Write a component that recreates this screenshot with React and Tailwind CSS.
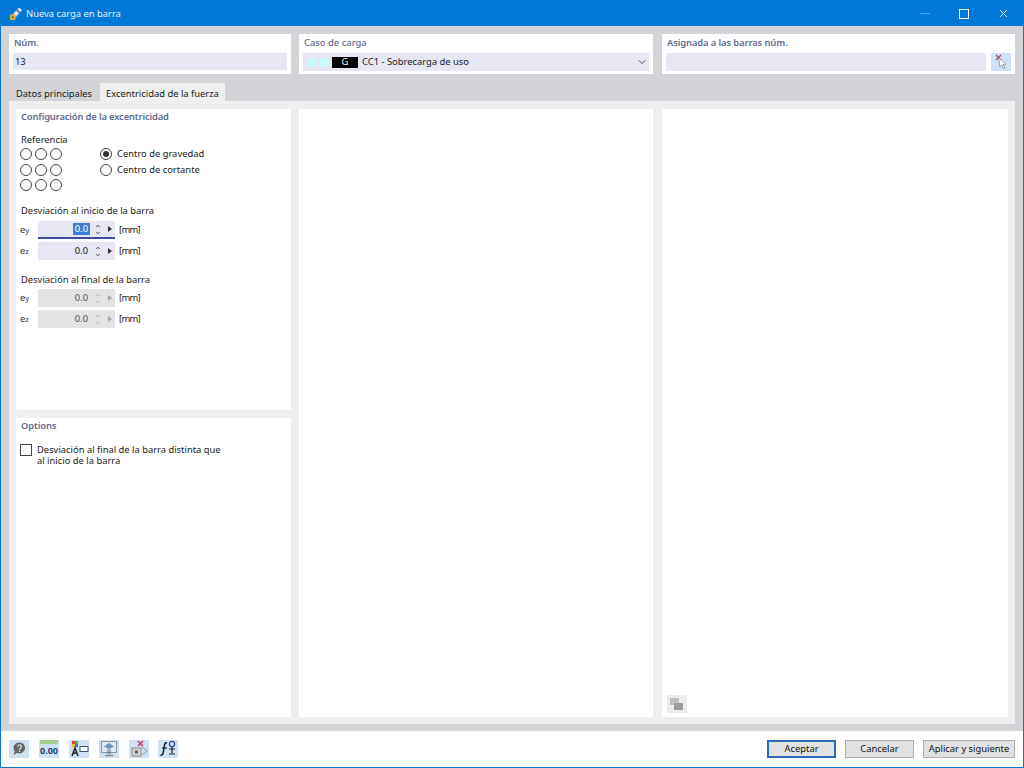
import { ChevronDown, ChevronUp, X } from "lucide-react";

function Radio({ checked }) {
  return (
    <span className="flex h-3 w-3 items-center justify-center rounded-full border border-[#444] bg-white">
      {checked && <span className="h-1.5 w-1.5 rounded-full bg-[#333]" />}
    </span>
  );
}

function Spinner({ off }) {
  const color = off ? "text-[#a8a8a8]" : "text-[#333]";
  return (
    <div className={`flex items-center ${color}`}>
      <div className="flex w-[7px] flex-col items-center gap-[1px]">
        <ChevronUp size={6} strokeWidth={3.5} />
        <ChevronDown size={6} strokeWidth={3.5} />
      </div>
      <svg className="ml-[7px] mr-[3px]" width="4" height="6" viewBox="0 0 4 6">
        <path d="M0 0 L4 3 L0 6 Z" fill="currentColor" />
      </svg>
    </div>
  );
}

function NumRow({ sub, active, off, className }) {
  return (
    <div className={`flex h-[18px] items-center ${className || ""}`}>
      <span className="w-[18px] text-[#333]">
        e<span className="text-[7.5px]">{sub}</span>
      </span>
      <div
        className={`flex h-[18px] w-[77px] items-center justify-end ${off ? "bg-[#e3e3e3] text-[#555]" : "bg-[#e6e7f3] text-[#222]"} ${active ? "border-b-2 border-[#3f4f9f]" : ""}`}
      >
        <span className={`mr-[4px] px-[2px] ${active ? "bg-[#3d7fd0] text-white" : ""}`}>0.0</span>
        <Spinner off={off} />
      </div>
      <span className="ml-[4px] tracking-[-0.7px] text-[#222]">[mm]</span>
    </div>
  );
}

function IconBtn({ children, className }) {
  return (
    <div className={`flex h-[18px] w-[20px] items-center justify-center bg-[#cfe2f5] ${className || ""}`}>
      {children}
    </div>
  );
}

function HelpIcon() {
  return (
    <svg width="16" height="16" viewBox="0 0 16 16">
      <path d="M8.5 1.5a5.5 5.5 0 1 1-2.6 10.3L2.5 14.5l1.2-4.2A5.5 5.5 0 0 1 8.5 1.5Z" fill="#666" />
      <path d="M6.8 5.6a1.8 1.8 0 1 1 2.6 1.7c-.7.4-.9.7-.9 1.5" fill="none" stroke="#cfe2f5" strokeWidth="1.3" />
      <rect x="7.8" y="9.6" width="1.4" height="1.4" fill="#cfe2f5" />
    </svg>
  );
}

function ZeroIcon() {
  return (
    <div className="flex h-[18px] w-[20px] flex-col items-center bg-[#cfe2f5]">
      <div className="h-[4px] w-[18px] bg-[#a3cf93]" />
      <span className="text-[9px] font-bold leading-[13px] text-[#25406b]">0.00</span>
    </div>
  );
}

function ColorsIcon() {
  return (
    <svg width="20" height="18" viewBox="0 0 20 18">
      <rect x="3" y="1" width="3" height="3" fill="#d9433a" />
      <rect x="6" y="1" width="3" height="3" fill="#58a84a" />
      <rect x="3" y="4" width="3" height="3" fill="#e6b83a" />
      <rect x="6" y="4" width="3" height="3" fill="#3a77c9" />
      <path d="M3 16 L6 8 L9 16 M4.3 13 H7.7" fill="none" stroke="#222" strokeWidth="1.5" />
      <rect x="11" y="6.5" width="8" height="5" fill="#fff" stroke="#33507f" />
    </svg>
  );
}

function ScreenIcon() {
  return (
    <svg width="20" height="18" viewBox="0 0 20 18">
      <rect x="2.5" y="1.5" width="15" height="11" fill="#dfe8f0" stroke="#8a949e" />
      <path d="M10 3 L15 6.5 L10 9 L5 6.5 Z" fill="#6b93ba" />
      <path d="M9 9 V14 M11 9 V14" stroke="#6b7a88" />
      <path d="M6 15.5 H14" stroke="#888" strokeWidth="1.5" />
    </svg>
  );
}

function CrossIcon() {
  return (
    <svg width="20" height="18" viewBox="0 0 20 18">
      <path d="M9 1 L14 6 M14 1 L9 6" stroke="#c2415a" strokeWidth="1.6" />
      <rect x="3" y="8" width="9" height="8" fill="#d4d4d4" stroke="#888" />
      <rect x="6" y="10.5" width="3" height="3" fill="#666" />
      <path d="M12 6 L18 11 L13 15" fill="none" stroke="#aaa" strokeWidth="1.2" />
    </svg>
  );
}

function FormulaIcon() {
  return (
    <svg width="20" height="18" viewBox="0 0 20 18">
      <path d="M9 3 C7 2 6.5 4 6 8 C5.5 12 5 16 2.5 15" fill="none" stroke="#222" strokeWidth="1.5" />
      <path d="M4 8 H9" stroke="#222" strokeWidth="1.2" />
      <circle cx="14" cy="4" r="2.6" fill="none" stroke="#33507f" strokeWidth="1.3" />
      <path d="M14 7 V13 M11 9 H17 M11 14 H17" stroke="#222" strokeWidth="1.2" />
    </svg>
  );
}

function PickIcon() {
  return (
    <svg width="16" height="16" viewBox="0 0 16 16">
      <path d="M3 1 L8 6 M8 1 L3 6" stroke="#b0475c" strokeWidth="1.4" />
      <path d="M6 4 L13 10 L10 10.5 L12 14 L10.5 14.5 L8.8 11 L6.5 12.5 Z" fill="#fff" stroke="#8a8a8a" strokeWidth="0.8" />
    </svg>
  );
}

export default function App() {
  return (
    <div className="flex h-[768px] w-[1024px] flex-col overflow-hidden border border-[#0b78d0] bg-[#d3d4d8] font-['Noto_Sans',sans-serif] text-[9.4px] leading-[12px]">
      <div className="flex h-[25px] shrink-0 items-center bg-[#0078d7] text-white">
        <svg className="ml-[7px]" width="15" height="15" viewBox="0 0 15 15">
          <path d="M5 8 L11 1.5 L14 4 L8 11 Z" fill="#d8dff0" />
          <path d="M8.5 3.5 L12 7" stroke="#4a5f95" strokeWidth="1.5" />
          <rect x="2" y="8.5" width="5.5" height="5.5" rx="1" fill="#e5b53a" />
          <circle cx="4.7" cy="11.2" r="1" fill="#6b4a10" />
        </svg>
        <span className="ml-[3px] text-[#e6f2fc]">Nueva carga en barra</span>
        <div className="ml-auto flex items-center">
          <span className="mr-[29px] h-px w-[10px] bg-[#4d9fe3]" />
          <span className="mr-[28px] h-[10px] w-[10px] border border-white" />
          <X className="mr-[13px] text-white" size={13} strokeWidth={1.5} />
        </div>
      </div>

      <div className="flex flex-1 flex-col px-2 pt-2">
        <div className="flex h-10 gap-2">
          <div className="w-[282px] bg-white px-1 pt-[3px]">
            <div className="h-[16px] pl-[1px] font-semibold tracking-[-0.1px] text-[#5f6b8f]">Núm.</div>
            <div className="flex h-[17px] items-center bg-[#e6e7f3] pl-[2px] text-[#222]">13</div>
          </div>
          <div className="w-[354px] bg-white px-1 pt-[3px]">
            <div className="h-[16px] pl-[1px] font-medium text-[#5f6b8f]">Caso de carga</div>
            <div className="flex h-[18px] items-center bg-[#e6e7f3] pl-[5px] text-[#222]">
              <span className="h-[9px] w-[9px] bg-[#ccf8fb]" />
              <span className="ml-[3px] h-[9px] w-[9px] bg-[#ccf8fb]" />
              <span className="ml-[3px] flex h-[11px] w-[26px] items-center justify-center bg-black text-white">G</span>
              <span className="ml-[4px]">CC1 - Sobrecarga de uso</span>
              <ChevronDown className="ml-auto mr-[1px] text-[#555]" size={12} />
            </div>
          </div>
          <div className="ml-px w-[353px] bg-white px-1 pt-[3px]">
            <div className="h-[16px] pl-[1px] font-semibold tracking-[-0.1px] text-[#5f6b8f]">Asignada a las barras núm.</div>
            <div className="flex h-[18px] gap-[5px]">
              <div className="w-[320px] bg-[#e6e7f3]" />
              <IconBtn>
                <PickIcon />
              </IconBtn>
            </div>
          </div>
        </div>

        <div className="mt-[9px] flex h-[18px] whitespace-nowrap text-[#222]">
          <div className="flex w-[91px] items-center pl-[7px] pt-[3px]">Datos principales</div>
          <div className="flex w-[125px] items-center bg-[#efefef] pl-[6px] pt-[3px]">Excentricidad de la fuerza</div>
        </div>

        <div className="flex h-[623px] bg-[#efefef] px-[7px] pb-[7px] pt-[8px] text-[#222]">
          <div className="flex w-[275px] flex-col gap-2">
            <div className="h-[301px] bg-white px-[4px] pt-[2px]">
              <div className="pl-[1px] font-semibold tracking-[-0.15px] text-[#5f6b8f]">Configuración de la excentricidad</div>
              <div className="mt-[11px] pl-[1px]">Referencia</div>
              <div className="mt-[2px] flex">
                <div className="grid w-[80px] grid-cols-[15px_15px_15px] gap-y-[3.5px]">
                  {[...Array(9)].map((_, i) => (
                    <Radio key={i} />
                  ))}
                </div>
                <div className="flex flex-col gap-[3.5px]">
                  <div className="flex items-center gap-[5px]">
                    <Radio checked />
                    <span>Centro de gravedad</span>
                  </div>
                  <div className="flex items-center gap-[5px]">
                    <Radio />
                    <span>Centro de cortante</span>
                  </div>
                </div>
              </div>
              <div className="mt-[14px] pl-[1px]">Desviación al inicio de la barra</div>
              <NumRow sub="y" active className="mt-[4px]" />
              <NumRow sub="z" className="mt-[3px]" />
              <div className="mt-[14px] pl-[1px]">Desviación al final de la barra</div>
              <NumRow sub="y" off className="mt-[3px]" />
              <NumRow sub="z" off className="mt-[3px]" />
            </div>
            <div className="h-[299px] bg-white px-[4px] pt-[2px]">
              <div className="pl-[1px] font-semibold tracking-[-0.1px] text-[#5f6b8f]">Options</div>
              <div className="mt-[11px] flex">
                <span className="mt-[1px] h-3 w-3 shrink-0 border border-[#444]" />
                <span className="ml-[5px] w-[190px] pt-[1px] leading-[11px]">
                  Desviación al final de la barra distinta que al inicio de la barra
                </span>
              </div>
            </div>
          </div>
          <div className="ml-2 w-[354px] bg-white" />
          <div className="ml-[9px] flex w-[346px] items-end bg-white p-[5px] pb-[4px]">
            <div className="flex h-[18px] w-[20px] items-center justify-center bg-[#ececec]">
              <svg width="16" height="14" viewBox="0 0 16 14">
                <rect x="1" y="1" width="9" height="7" fill="#c0c0c0" />
                <rect x="5" y="6" width="9" height="7" fill="#9a9a9a" />
              </svg>
            </div>
          </div>
        </div>
      </div>

      <div className="flex h-[36px] shrink-0 items-center bg-white px-2">
        <div className="flex gap-[10px]">
          <IconBtn>
            <HelpIcon />
          </IconBtn>
          <ZeroIcon />
          <IconBtn>
            <ColorsIcon />
          </IconBtn>
          <IconBtn>
            <ScreenIcon />
          </IconBtn>
          <IconBtn>
            <CrossIcon />
          </IconBtn>
          <IconBtn className="-ml-px">
            <FormulaIcon />
          </IconBtn>
        </div>
        <div className="ml-auto flex gap-[9px] text-[#111]">
          <button className="h-[18px] w-[69px] border-2 border-[#2a6cb5] bg-[#e1e1e1]">Aceptar</button>
          <button className="h-[18px] w-[69px] border border-[#adadad] bg-[#e1e1e1]">Cancelar</button>
          <button className="h-[18px] w-[92px] border border-[#adadad] bg-[#e1e1e1]">Aplicar y siguiente</button>
        </div>
      </div>
    </div>
  );
}
